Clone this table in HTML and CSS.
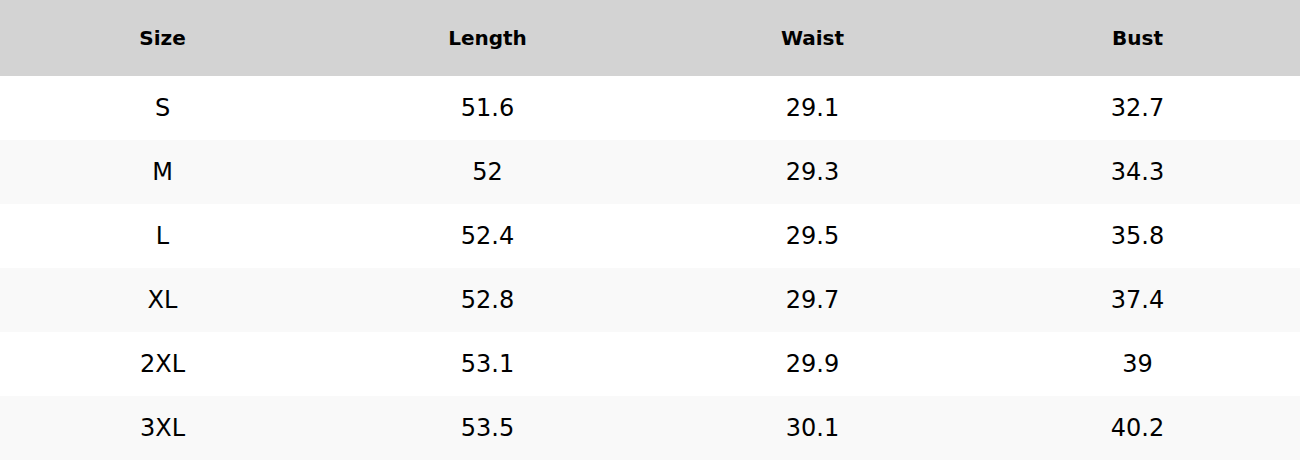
FILE: index.html
```html
<!DOCTYPE html>
<html>
<head>
<meta charset="utf-8">
<link rel="stylesheet" href="styles.css">
</head>
<body>
<table class="size-table">
  <thead>
    <tr><th>Size</th><th>Length</th><th>Waist</th><th>Bust</th></tr>
  </thead>
  <tbody>
    <tr><td>S</td><td>51.6</td><td>29.1</td><td>32.7</td></tr>
    <tr><td>M</td><td>52</td><td>29.3</td><td>34.3</td></tr>
    <tr><td>L</td><td>52.4</td><td>29.5</td><td>35.8</td></tr>
    <tr><td>XL</td><td>52.8</td><td>29.7</td><td>37.4</td></tr>
    <tr><td>2XL</td><td>53.1</td><td>29.9</td><td>39</td></tr>
    <tr><td>3XL</td><td>53.5</td><td>30.1</td><td>40.2</td></tr>
  </tbody>
</table>
</body>
</html>
```
FILE: styles.css
```css
html, body {
  margin: 0;
  padding: 0;
  background: #ffffff;
}
.size-table {
  width: 1300px;
  border-collapse: collapse;
  table-layout: fixed;
  font-family: "DejaVu Sans", sans-serif;
  color: #000;
}
.size-table th {
  height: 76px;
  padding: 0;
  background: #d3d3d3;
  font-size: 20px;
  font-weight: bold;
  text-align: center;
  vertical-align: middle;
}
.size-table td {
  height: 64px;
  padding: 0;
  font-size: 24px;
  text-align: center;
  vertical-align: middle;
}
.size-table tbody tr:nth-child(even) td {
  background: #f9f9f9;
}
```
